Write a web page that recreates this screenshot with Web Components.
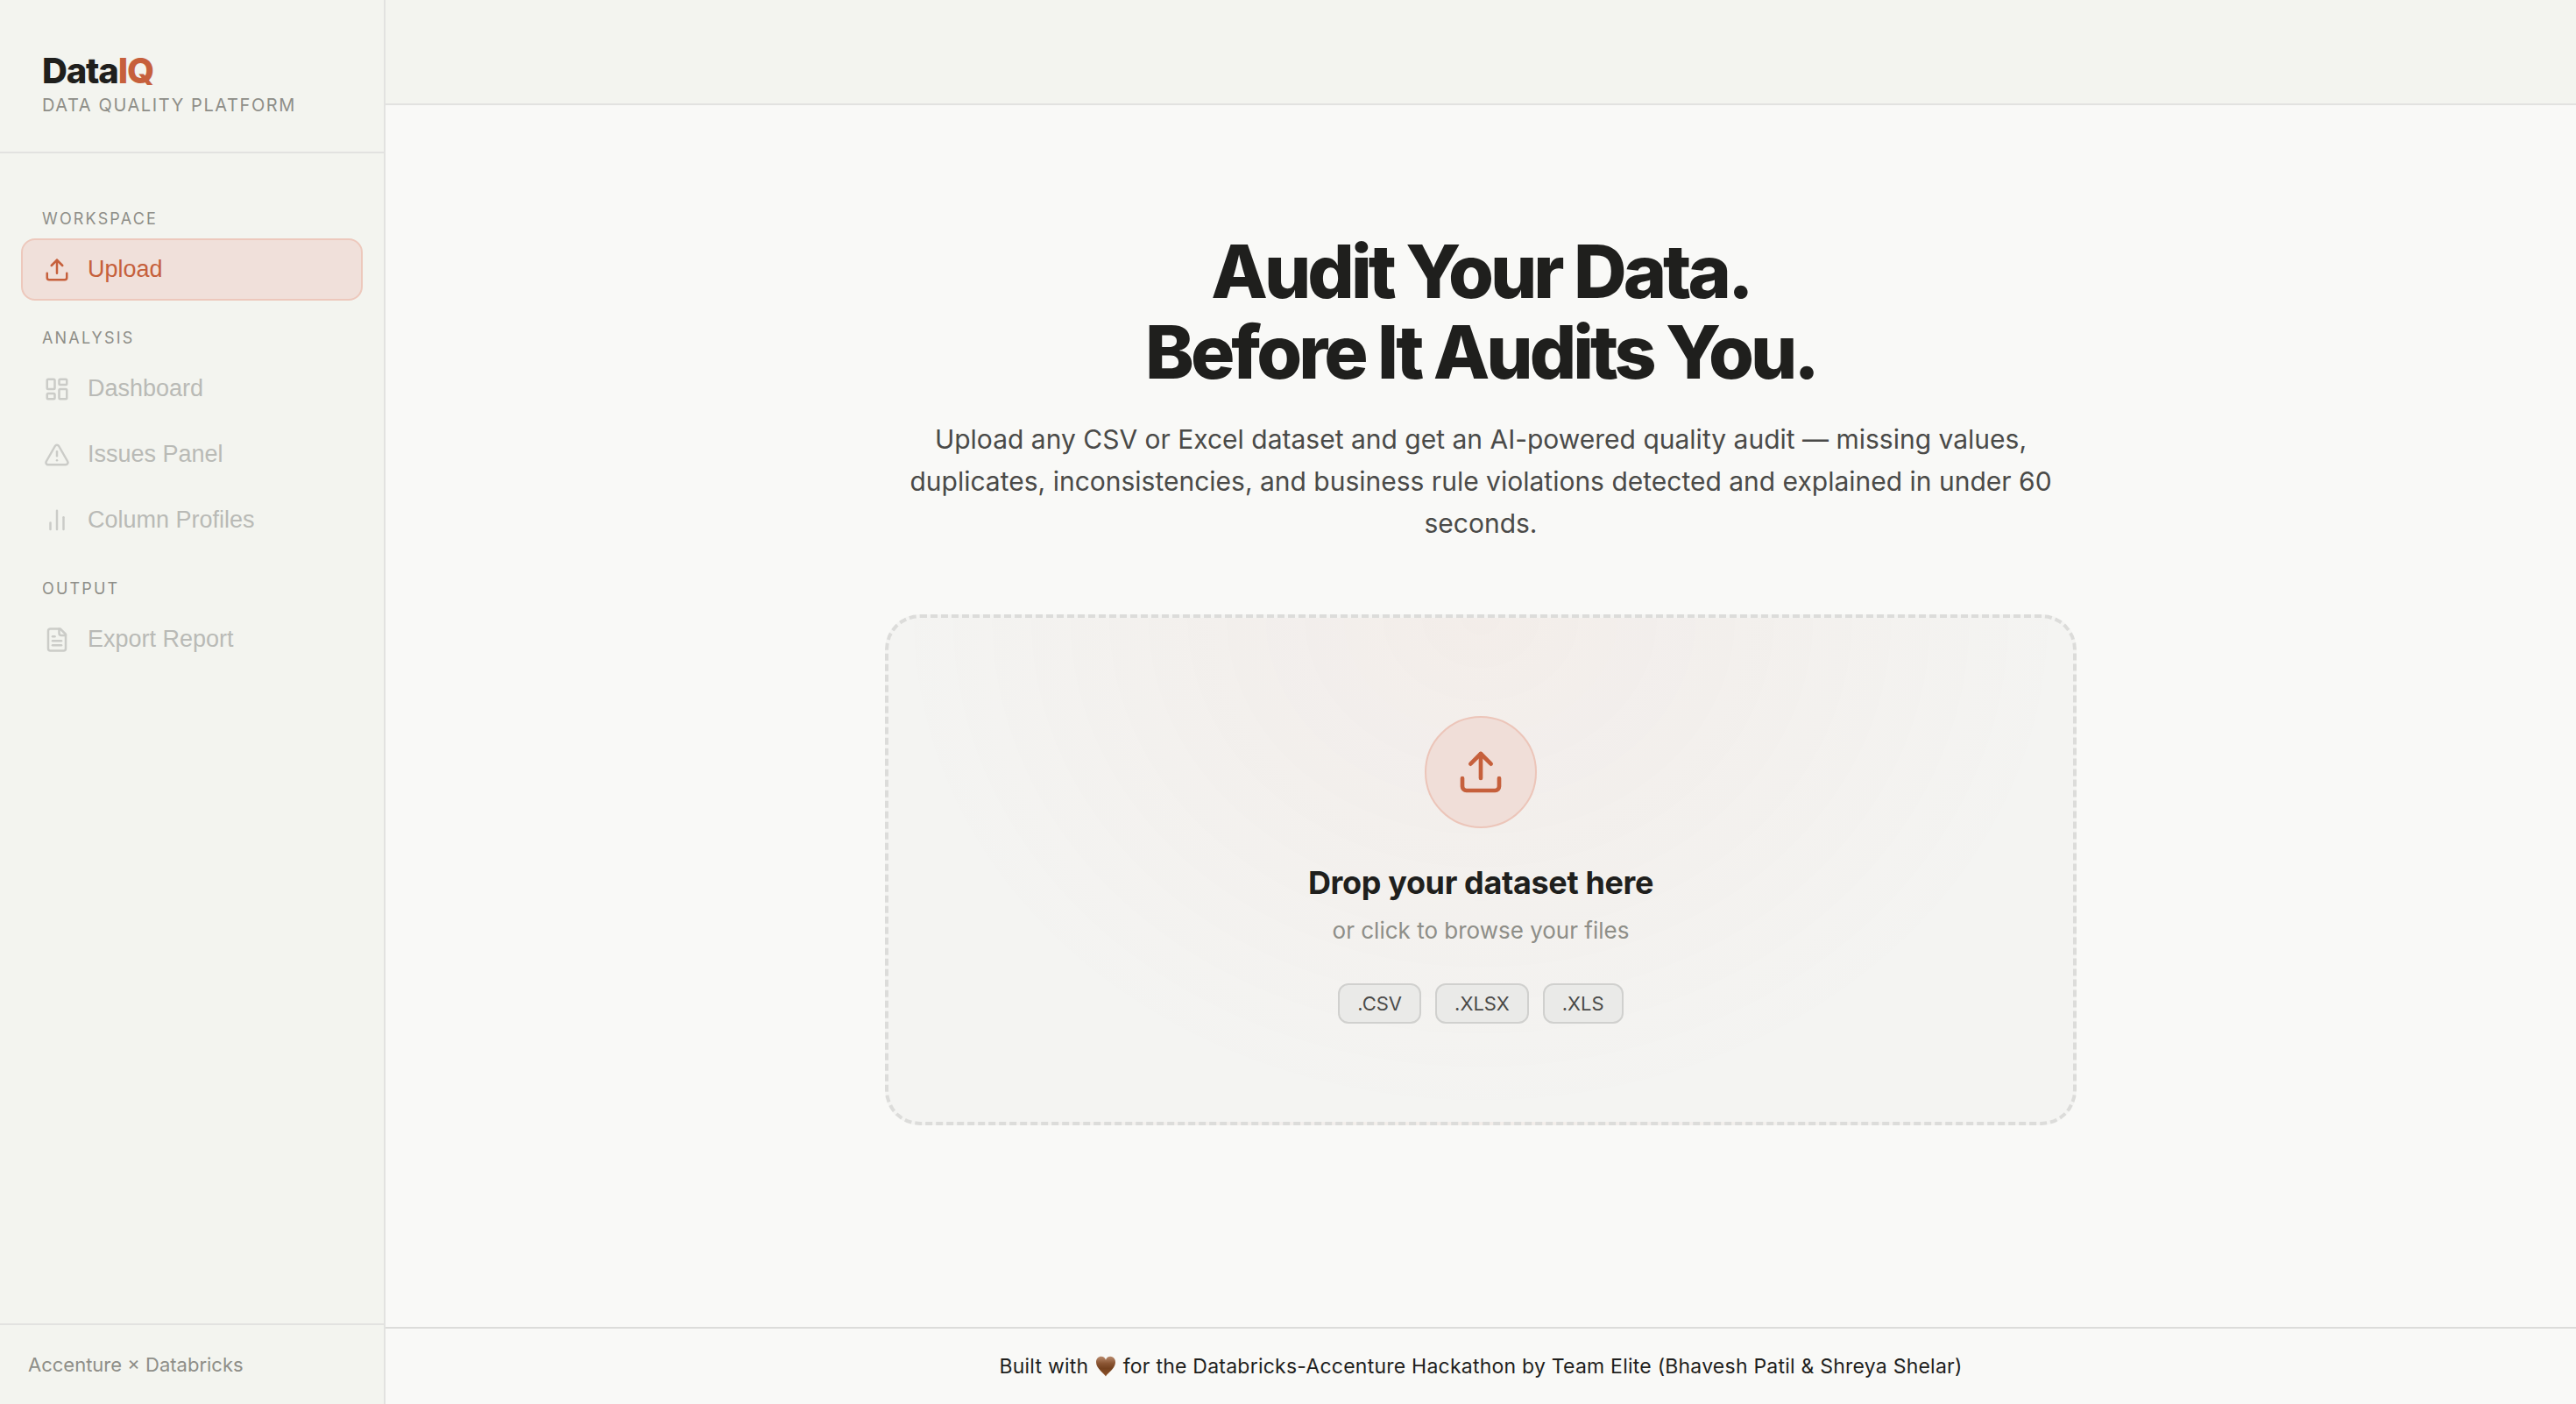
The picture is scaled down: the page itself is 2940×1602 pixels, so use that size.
<!DOCTYPE html>
<html lang="en">
<head>
<meta charset="UTF-8">
<meta name="viewport" content="width=device-width, initial-scale=1.0">
<title>DataIQ</title>
<style>
  :root {
    --bg: #f9f9f7;
    --panel: #f3f4ef;
    --line: #e2e2e0;
    --line-strong: #dcdcda;
    --ink: #1f1f1d;
    --ink-soft: #4a4a48;
    --muted: #8e8e88;
    --accent: #c6603c;
    --accent-bg: #f0e0da;
    --accent-line: #edc8bc;
  }
  body {
    margin: 0;
    background: var(--bg);
    color: var(--ink);
    font-family: Inter, "Liberation Sans", sans-serif;
    font-size: 24px;
  }
</style>
</head>
<body>
<data-iq-app></data-iq-app>

<script>
  const ICONS = {
    upload: `<path d="M21 15v4a2 2 0 0 1-2 2H5a2 2 0 0 1-2-2v-4"/><polyline points="17 8 12 3 7 8"/><line x1="12" y1="3" x2="12" y2="15"/>`,
    dashboard: `<rect x="3" y="3" width="7" height="9" rx="1"/><rect x="14" y="3" width="7" height="5" rx="1"/><rect x="14" y="12" width="7" height="9" rx="1"/><rect x="3" y="16" width="7" height="5" rx="1"/>`,
    alert: `<path d="m21.73 18-8-14a2 2 0 0 0-3.48 0l-8 14A2 2 0 0 0 4 21h16a2 2 0 0 0 1.73-3"/><path d="M12 9v4"/><path d="M12 17h.01"/>`,
    chart: `<line x1="12" y1="20" x2="12" y2="3"/><line x1="18" y1="20" x2="18" y2="9"/><line x1="6" y1="20" x2="6" y2="14"/>`,
    file: `<path d="M15 2H6a2 2 0 0 0-2 2v16a2 2 0 0 0 2 2h12a2 2 0 0 0 2-2V7Z"/><path d="M14 2v4a2 2 0 0 0 2 2h4"/><path d="M10 9H8"/><path d="M16 13H8"/><path d="M16 17H8"/>`,
  };

  class LineIcon extends HTMLElement {
    constructor() {
      super();
      this.attachShadow({ mode: "open" });
    }

    connectedCallback() {
      this.shadowRoot.innerHTML = `
        <style>
          :host { display: block; width: 30px; height: 30px; flex: none; }
          svg { display: block; width: 100%; height: 100%; }
        </style>
        <svg viewBox="0 0 24 24" fill="none" stroke="currentColor" stroke-width="2"
          stroke-linecap="round" stroke-linejoin="round" aria-hidden="true">${ICONS[this.getAttribute("name")]}</svg>
      `;
    }
  }
  customElements.define("line-icon", LineIcon);

  class NavItem extends HTMLElement {
    constructor() {
      super();
      this.attachShadow({ mode: "open" });
    }

    connectedCallback() {
      const disabled = this.hasAttribute("active") ? "" : "disabled";
      this.shadowRoot.innerHTML = `
        <style>
          :host { display: block; margin-bottom: 4px; }
          button {
            display: flex;
            align-items: center;
            gap: 20px;
            width: 100%;
            padding: 18px 24px;
            border: 2px solid transparent;
            border-radius: 16px;
            background: none;
            color: var(--accent);
            font-family: "Liberation Sans", Arial, sans-serif;
            font-size: 27px;
            line-height: 31px;
            text-align: left;
            cursor: pointer;
          }
          button:disabled { color: #b9bab6; cursor: default; }
          button:disabled line-icon { color: #cbccc8; }
          :host([active]) button {
            background: var(--accent-bg);
            border-color: var(--accent-line);
          }
        </style>
        <button type="button" ${disabled}>
          <line-icon name="${this.getAttribute("icon")}"></line-icon>
          <slot></slot>
        </button>
      `;
    }
  }
  customElements.define("nav-item", NavItem);

  class NavGroup extends HTMLElement {
    constructor() {
      super();
      this.attachShadow({ mode: "open" });
    }

    connectedCallback() {
      this.shadowRoot.innerHTML = `
        <style>
          :host { display: block; }
          .label {
            padding: 24px 24px 8px;
            color: var(--muted);
            font-size: 18px;
            line-height: 29px;
            letter-spacing: 0.12em;
          }
        </style>
        <div class="label">${this.getAttribute("label")}</div>
        <slot></slot>
      `;
    }
  }
  customElements.define("nav-group", NavGroup);

  class AppSidebar extends HTMLElement {
    constructor() {
      super();
      this.attachShadow({ mode: "open" });
      this.shadowRoot.innerHTML = `
        <style>
          :host {
            display: flex;
            flex-direction: column;
            box-sizing: border-box;
            border-right: 2px solid var(--line);
            background: var(--panel);
          }
          header {
            padding: 56px 48px 38px;
            border-bottom: 2px solid var(--line);
          }
          .logo {
            font-size: 40px;
            font-weight: 800;
            line-height: 50px;
            letter-spacing: -0.03em;
          }
          .logo span { color: var(--accent); }
          .tagline {
            color: var(--muted);
            font-size: 20px;
            line-height: 29px;
            letter-spacing: 0.08em;
            white-space: nowrap;
          }
          nav { flex: 1; padding: 36px 24px; }
          footer {
            padding: 28px 32px;
            border-top: 2px solid var(--line);
            color: var(--muted);
            font-size: 22px;
            line-height: 34px;
          }
        </style>
        <header>
          <div class="logo">Data<span>IQ</span></div>
          <div class="tagline">DATA QUALITY PLATFORM</div>
        </header>
        <nav>
          <nav-group label="WORKSPACE">
            <nav-item icon="upload" active>Upload</nav-item>
          </nav-group>
          <nav-group label="ANALYSIS">
            <nav-item icon="dashboard">Dashboard</nav-item>
            <nav-item icon="alert">Issues Panel</nav-item>
            <nav-item icon="chart">Column Profiles</nav-item>
          </nav-group>
          <nav-group label="OUTPUT">
            <nav-item icon="file">Export Report</nav-item>
          </nav-group>
        </nav>
        <footer>Accenture × Databricks</footer>
      `;
    }
  }
  customElements.define("app-sidebar", AppSidebar);

  class FileChip extends HTMLElement {
    constructor() {
      super();
      this.attachShadow({ mode: "open" });
      this.shadowRoot.innerHTML = `
        <style>
          :host {
            display: block;
            padding: 4px 20px;
            border: 2px solid #d0d0ce;
            border-radius: 12px;
            background: #eaeae8;
            color: var(--ink-soft);
            font-size: 22px;
            line-height: 34px;
          }
        </style>
        <slot></slot>
      `;
    }
  }
  customElements.define("file-chip", FileChip);

  class DropZone extends HTMLElement {
    constructor() {
      super();
      this.attachShadow({ mode: "open" });
      this.shadowRoot.innerHTML = `
        <style>
          :host { display: block; }
          label {
            display: flex;
            flex-direction: column;
            align-items: center;
            padding: 112px 48px;
            border: 4px dashed var(--line-strong);
            border-radius: 40px;
            background: radial-gradient(ellipse at 50% 0%, rgba(217, 119, 87, 0.06), transparent 70%) #f4f4f2;
            cursor: pointer;
          }
          input {
            position: absolute;
            width: 1px;
            height: 1px;
            opacity: 0;
          }
          .circle {
            display: flex;
            align-items: center;
            justify-content: center;
            box-sizing: border-box;
            width: 128px;
            height: 128px;
            margin-bottom: 32px;
            border: 2px solid #ecc5b9;
            border-radius: 50%;
            background: #f0ded8;
            color: var(--accent);
          }
          .circle line-icon { width: 56px; height: 56px; }
          .title {
            margin-bottom: 4px;
            font-size: 36px;
            font-weight: 700;
            line-height: 60px;
            letter-spacing: -0.01em;
          }
          .hint {
            margin-bottom: 40px;
            color: var(--muted);
            font-size: 26px;
            line-height: 41px;
          }
          .chips { display: flex; gap: 16px; }
        </style>
        <label for="file">
          <input id="file" type="file" accept=".csv,.xlsx,.xls">
          <span class="circle"><line-icon name="upload"></line-icon></span>
          <span class="title">Drop your dataset here</span>
          <span class="hint">or click to browse your files</span>
          <span class="chips">
            <file-chip>.CSV</file-chip>
            <file-chip>.XLSX</file-chip>
            <file-chip>.XLS</file-chip>
          </span>
        </label>
      `;
    }
  }
  customElements.define("drop-zone", DropZone);

  class UploadHero extends HTMLElement {
    constructor() {
      super();
      this.attachShadow({ mode: "open" });
      this.shadowRoot.innerHTML = `
        <style>
          :host {
            display: block;
            box-sizing: border-box;
            width: 100%;
            max-width: 1360px;
            margin: 0 auto;
            padding: 144px 0;
            text-align: center;
          }
          h1 {
            margin: 0 0 29px;
            font-size: 84px;
            font-weight: 800;
            line-height: 92px;
            letter-spacing: -4px;
          }
          p {
            margin: 0 0 80px;
            color: var(--ink-soft);
            font-size: 30px;
            line-height: 48px;
          }
        </style>
        <h1>Audit Your Data.<br>Before It Audits You.</h1>
        <p>Upload any CSV or Excel dataset and get an AI-powered quality audit — missing values, duplicates, inconsistencies, and business rule violations detected and explained in under 60 seconds.</p>
        <drop-zone></drop-zone>
      `;
    }
  }
  customElements.define("upload-hero", UploadHero);

  class AppFooter extends HTMLElement {
    constructor() {
      super();
      this.attachShadow({ mode: "open" });
      this.shadowRoot.innerHTML = `
        <style>
          :host {
            display: block;
            padding: 24px;
            border-top: 2px solid var(--line-strong);
            font-size: 23px;
            line-height: 38px;
            letter-spacing: 0.01em;
            text-align: center;
          }
          svg { width: 26px; height: 24px; vertical-align: -4px; }
        </style>
        Built with
        <svg viewBox="0 0 24 24" role="img" aria-label="brown heart">
          <defs>
            <linearGradient id="heart" x1="0" y1="0" x2="0" y2="1">
              <stop offset="0" stop-color="#b98a6c"/>
              <stop offset="0.35" stop-color="#8a5533"/>
              <stop offset="0.6" stop-color="#75421f"/>
              <stop offset="1" stop-color="#8f5228"/>
            </linearGradient>
          </defs>
          <path fill="url(#heart)" d="M12 23.4C10.6 20.4 1 14.6 1 7.2C1 3.4 3.6 0.8 6.8 0.8C9.4 0.8 11.2 2.4 12 4.8C12.8 2.4 14.6 0.8 17.2 0.8C20.4 0.8 23 3.4 23 7.2C23 14.6 13.4 20.4 12 23.4Z"/>
        </svg>
        for the Databricks-Accenture Hackathon by Team Elite (Bhavesh Patil &amp; Shreya Shelar)
      `;
    }
  }
  customElements.define("app-footer", AppFooter);

  class DataIqApp extends HTMLElement {
    constructor() {
      super();
      this.attachShadow({ mode: "open" });
      this.shadowRoot.innerHTML = `
        <style>
          :host {
            display: grid;
            grid-template-columns: 440px 1fr;
            min-height: 100vh;
          }
          .content {
            display: flex;
            flex-direction: column;
          }
          .topbar {
            box-sizing: border-box;
            height: 120px;
            border-bottom: 2px solid var(--line);
            background: var(--panel);
          }
          main { flex: 1; }
        </style>
        <app-sidebar></app-sidebar>
        <div class="content">
          <div class="topbar"></div>
          <main><upload-hero></upload-hero></main>
          <app-footer></app-footer>
        </div>
      `;
    }
  }
  customElements.define("data-iq-app", DataIqApp);
</script>
</body>
</html>
